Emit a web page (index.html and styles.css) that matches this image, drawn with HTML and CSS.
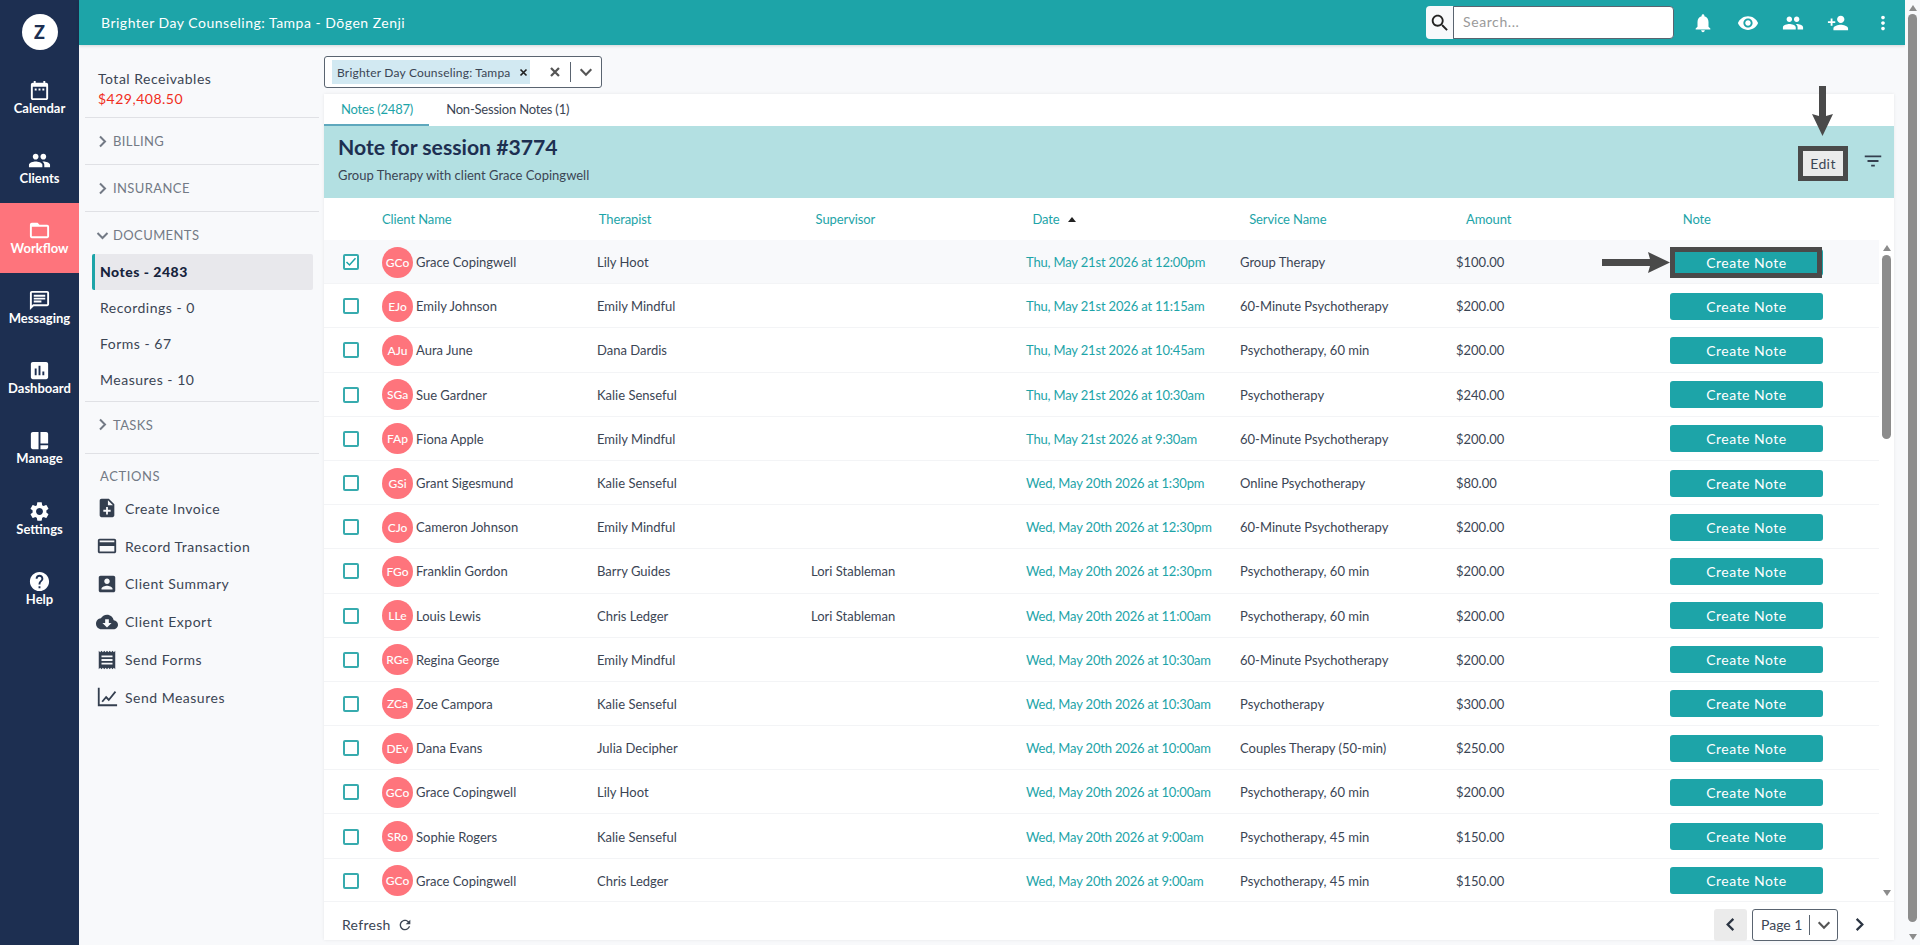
FILE: index.html
```html
<!DOCTYPE html>
<html lang="en">
<head>
    <meta charset="UTF-8">
    <meta name="viewport" content="width=device-width, initial-scale=1.0">
    <title>Notes - Brighter Day Counseling</title>
    <link rel="stylesheet" href="styles.css">
</head>
<body>
    <!-- Icon set -->
    <svg class="icon-defs" xmlns="http://www.w3.org/2000/svg">
        <symbol id="i-calendar" viewBox="0 0 24 24"><path d="M19 4h-1V2h-2v2H8V2H6v2H5C3.9 4 3 4.9 3 6v14c0 1.1.9 2 2 2h14c1.100 0 2-.9 2-2V6c0-1.1-.9-2-2-2zm0 16H5V8h14v12zM7 10h2v2H7zm4 0h2v2h-2zm4 0h2v2h-2z"/></symbol>
        <symbol id="i-people" viewBox="0 0 24 24"><path d="M16 11c1.66 0 2.99-1.34 2.99-3S17.66 5 16 5c-1.66 0-3 1.34-3 3s1.34 3 3 3zm-8 0c1.66 0 2.99-1.34 2.99-3S9.66 5 8 5C6.34 5 5 6.34 5 8s1.34 3 3 3zm0 2c-2.33 0-7 1.17-7 3.5V19h14v-2.5c0-2.33-4.67-3.5-7-3.5zm8 0c-.29 0-.62.02-.97.05 1.16.84 1.97 1.97 1.97 3.45V19h6v-2.5c0-2.33-4.67-3.5-7-3.5z"/></symbol>
        <symbol id="i-folder" viewBox="0 0 24 24"><path d="M20 6h-8l-2-2H4c-1.1 0-1.99.9-1.99 2L2 18c0 1.1.9 2 2 2h16c1.1 0 2-.9 2-2V8c0-1.1-.9-2-2-2zm0 12H4V8h16v10z"/></symbol>
        <symbol id="i-message" viewBox="0 0 24 24"><path d="M20 2H4c-1.1 0-1.99.9-1.99 2L2 22l4-4h14c1.1 0 2-.9 2-2V4c0-1.1-.9-2-2-2zm0 14H5.17L4 17.17V4h16v12zM6 12h8v2H6zm0-3h12v2H6zm0-3h12v2H6z"/></symbol>
        <symbol id="i-chart" viewBox="0 0 24 24"><path d="M19 3H5c-1.1 0-2 .9-2 2v14c0 1.1.9 2 2 2h14c1.1 0 2-.9 2-2V5c0-1.1-.9-2-2-2zM9 17H7v-7h2v7zm4 0h-2V7h2v10zm4 0h-2v-4h2v4z"/></symbol>
        <symbol id="i-manage" viewBox="0 0 24 24"><path d="M3 5v14c0 1.1.9 2 2 2h6V3H5c-1.1 0-2 .9-2 2zm10-2v12h8V5c0-1.1-.9-2-2-2zm0 14v4h6c1.1 0 2-.9 2-2v-2z"/></symbol>
        <symbol id="i-settings" viewBox="0 0 24 24"><path d="M19.14 12.94c.04-.3.06-.61.06-.94 0-.32-.02-.64-.07-.94l2.03-1.58c.18-.14.23-.41.12-.61l-1.92-3.32c-.12-.22-.37-.29-.59-.22l-2.39.96c-.5-.38-1.03-.7-1.62-.94l-.36-2.54c-.04-.24-.24-.41-.48-.41h-3.84c-.24 0-.43.17-.47.41l-.36 2.54c-.59.24-1.13.57-1.62.94l-2.39-.96c-.22-.08-.47 0-.59.22L2.74 8.87c-.12.21-.08.47.12.61l2.03 1.58c-.05.3-.09.63-.09.94s.02.64.07.94l-2.03 1.58c-.18.14-.23.41-.12.61l1.92 3.32c.12.22.37.29.59.22l2.39-.96c.5.38 1.03.7 1.62.94l.36 2.54c.05.24.24.41.48.41h3.84c.24 0 .44-.17.47-.41l.36-2.54c.59-.24 1.13-.56 1.62-.94l2.39.96c.22.08.47 0 .59-.22l1.92-3.32c.12-.22.07-.47-.12-.61l-2.01-1.58zM12 15.6c-1.98 0-3.6-1.62-3.6-3.6s1.62-3.6 3.6-3.6 3.6 1.62 3.6 3.6-1.62 3.6-3.6 3.6z"/></symbol>
        <symbol id="i-help" viewBox="0 0 24 24"><path d="M12 2C6.48 2 2 6.48 2 12s4.48 10 10 10 10-4.48 10-10S17.52 2 12 2zm1 17h-2v-2h2v2zm2.07-7.75l-.9.92C13.45 12.9 13 13.5 13 15h-2v-.5c0-1.1.45-2.1 1.17-2.83l1.24-1.26c.37-.36.59-.86.59-1.41 0-1.1-.9-2-2-2s-2 .9-2 2H8c0-2.21 1.79-4 4-4s4 1.79 4 4c0 .88-.36 1.68-.93 2.25z"/></symbol>
        <symbol id="i-note-add" viewBox="0 0 24 24"><path d="M14 2H6c-1.1 0-1.99.9-1.99 2L4 20c0 1.1.89 2 1.99 2H18c1.1 0 2-.9 2-2V8l-6-6zm2 14h-3v3h-2v-3H8v-2h3v-3h2v3h3v2zm-3-7V3.5L18.5 9H13z"/></symbol>
        <symbol id="i-card" viewBox="0 0 24 24"><path d="M20 4H4c-1.11 0-1.99.89-1.99 2L2 18c0 1.11.89 2 2 2h16c1.11 0 2-.89 2-2V6c0-1.11-.89-2-2-2zm0 14H4v-6h16v6zm0-10H4V6h16v2z"/></symbol>
        <symbol id="i-account" viewBox="0 0 24 24"><path d="M3 5v14c0 1.1.89 2 2 2h14c1.1 0 2-.9 2-2V5c0-1.1-.9-2-2-2H5c-1.11 0-2 .9-2 2zm12 4c0 1.66-1.34 3-3 3s-3-1.34-3-3 1.34-3 3-3 3 1.34 3 3zm-9 8c0-2 4-3.1 6-3.1s6 1.1 6 3.1v1H6v-1z"/></symbol>
        <symbol id="i-cloud" viewBox="0 0 24 24"><path d="M19.35 10.04C18.67 6.59 15.64 4 12 4 9.11 4 6.6 5.64 5.35 8.04 2.34 8.36 0 10.91 0 14c0 3.31 2.69 6 6 6h13c2.76 0 5-2.24 5-5 0-2.64-2.05-4.78-4.65-4.96zM17 13l-5 5-5-5h3V9h4v4h3z"/></symbol>
        <symbol id="i-receipt" viewBox="0 0 24 24"><path d="M18 17H6v-2h12v2zm0-4H6v-2h12v2zm0-4H6V7h12v2zM3 22l1.5-1.5L6 22l1.5-1.5L9 22l1.5-1.5L12 22l1.5-1.5L15 22l1.5-1.5L18 22l1.5-1.5L21 22V2l-1.5 1.5L18 2l-1.5 1.5L15 2l-1.5 1.5L12 2l-1.5 1.5L9 2 7.5 3.5 6 2 4.5 3.5 3 2v20z"/></symbol>
        <symbol id="i-measure" viewBox="0 0 24 24"><path d="M2 2h2v18h19v2H2zM6 16.5l5-6 3 3 6.5-8 1.5 1.2-8 9.8-3-3-3.5 4.2z"/></symbol>
        <symbol id="i-bell" viewBox="0 0 24 24"><path d="M12 22c1.1 0 2-.9 2-2h-4c0 1.1.89 2 2 2zm6-6v-5c0-3.07-1.64-5.64-4.5-6.32V4c0-.83-.67-1.5-1.5-1.5s-1.5.67-1.5 1.5v.68C7.63 5.36 6 7.92 6 11v5l-2 2v1h16v-1l-2-2z"/></symbol>
        <symbol id="i-eye" viewBox="0 0 24 24"><path d="M12 4.5C7 4.5 2.73 7.61 1 12c1.73 4.39 6 7.5 11 7.5s9.27-3.11 11-7.5c-1.73-4.39-6-7.5-11-7.5zM12 17c-2.76 0-5-2.24-5-5s2.24-5 5-5 5 2.24 5 5-2.24 5-5 5zm0-8c-1.66 0-3 1.34-3 3s1.34 3 3 3 3-1.34 3-3-1.34-3-3-3z"/></symbol>
        <symbol id="i-person-add" viewBox="0 0 24 24"><path d="M15 12c2.21 0 4-1.79 4-4s-1.79-4-4-4-4 1.79-4 4 1.79 4 4 4zm-9-2V7H4v3H1v2h3v3h2v-3h3v-2H6zm9 4c-2.67 0-8 1.34-8 4v2h16v-2c0-2.66-5.33-4-8-4z"/></symbol>
        <symbol id="i-more" viewBox="0 0 24 24"><path d="M12 8c1.1 0 2-.9 2-2s-.9-2-2-2-2 .9-2 2 .9 2 2 2zm0 2c-1.1 0-2 .9-2 2s.9 2 2 2 2-.9 2-2-.9-2-2-2zm0 6c-1.1 0-2 .9-2 2s.9 2 2 2 2-.9 2-2-.9-2-2-2z"/></symbol>
        <symbol id="i-search" viewBox="0 0 24 24"><path d="M15.5 14h-.79l-.28-.27C15.41 12.59 16 11.11 16 9.5 16 5.91 13.09 3 9.5 3S3 5.91 3 9.5 5.91 16 9.5 16c1.61 0 3.09-.59 4.23-1.57l.27.28v.79l5 4.99L20.49 19l-4.99-5zm-6 0C7.01 14 5 11.99 5 9.5S7.01 5 9.5 5 14 7.01 14 9.5 11.99 14 9.5 14z"/></symbol>
        <symbol id="i-filter" viewBox="0 0 24 24"><path d="M10 18h4v-2h-4v2zM3 6v2h18V6H3zm3 7h12v-2H6v2z"/></symbol>
        <symbol id="i-refresh" viewBox="0 0 24 24"><path d="M17.65 6.35C16.2 4.9 14.21 4 12 4c-4.42 0-7.99 3.58-7.99 8s3.57 8 7.99 8c3.73 0 6.84-2.55 7.73-6h-2.08c-.82 2.33-3.04 4-5.65 4-3.31 0-6-2.69-6-6s2.69-6 6-6c1.66 0 3.14.69 4.22 1.78L13 11h7V4l-2.35 2.35z"/></symbol>
        <symbol id="i-right" viewBox="0 0 24 24"><path d="M8 4l8 8-8 8" fill="none" stroke="currentColor" stroke-width="3.2"/></symbol>
        <symbol id="i-left" viewBox="0 0 24 24"><path d="M16 4l-8 8 8 8" fill="none" stroke="currentColor" stroke-width="3.2"/></symbol>
        <symbol id="i-down" viewBox="0 0 24 24"><path d="M4 8l8 8 8-8" fill="none" stroke="currentColor" stroke-width="3.2"/></symbol>
        <symbol id="i-close" viewBox="0 0 24 24"><path d="M4 4l16 16M20 4L4 20" fill="none" stroke="currentColor" stroke-width="4.5"/></symbol>
    </svg>

    <div class="app">
        <!-- Main navigation -->
        <nav class="nav">
            <div class="nav-logo"><span>Z</span></div>
            <a class="nav-item"><svg><use href="#i-calendar"/></svg>Calendar</a>
            <a class="nav-item"><svg><use href="#i-people"/></svg>Clients</a>
            <a class="nav-item active"><svg><use href="#i-folder"/></svg>Workflow</a>
            <a class="nav-item"><svg><use href="#i-message"/></svg>Messaging</a>
            <a class="nav-item"><svg><use href="#i-chart"/></svg>Dashboard</a>
            <a class="nav-item"><svg><use href="#i-manage"/></svg>Manage</a>
            <a class="nav-item"><svg><use href="#i-settings"/></svg>Settings</a>
            <a class="nav-item"><svg><use href="#i-help"/></svg>Help</a>
        </nav>

        <div class="page">
            <!-- Top bar -->
            <header class="topbar">
                <div class="topbar-title">Brighter Day Counseling: Tampa - Dōgen Zenji</div>
                <div class="search">
                    <span class="search-btn"><svg><use href="#i-search"/></svg></span>
                    <span class="search-input">Search...</span>
                </div>
                <div class="topbar-icons">
                    <svg><use href="#i-bell"/></svg>
                    <svg><use href="#i-eye"/></svg>
                    <svg><use href="#i-people"/></svg>
                    <svg><use href="#i-person-add"/></svg>
                    <svg><use href="#i-more"/></svg>
                </div>
            </header>

            <div class="content">
                <!-- Secondary sidebar -->
                <aside class="side">
                    <div class="receivables">
                        <div>Total Receivables</div>
                        <div class="red">$429,408.50</div>
                    </div>
                    <div class="side-section"><svg><use href="#i-right"/></svg>BILLING</div>
                    <div class="side-section"><svg><use href="#i-right"/></svg>INSURANCE</div>
                    <div class="side-group">
                        <div class="side-section plain"><svg><use href="#i-down"/></svg>DOCUMENTS</div>
                        <a class="side-link current">Notes - 2483</a>
                        <a class="side-link">Recordings - 0</a>
                        <a class="side-link">Forms - 67</a>
                        <a class="side-link">Measures - 10</a>
                    </div>
                    <div class="side-section tall"><svg><use href="#i-right"/></svg>TASKS</div>
                    <div class="actions-title">ACTIONS</div>
                    <a class="action"><svg><use href="#i-note-add"/></svg>Create Invoice</a>
                    <a class="action"><svg><use href="#i-card"/></svg>Record Transaction</a>
                    <a class="action"><svg><use href="#i-account"/></svg>Client Summary</a>
                    <a class="action"><svg><use href="#i-cloud"/></svg>Client Export</a>
                    <a class="action"><svg><use href="#i-receipt"/></svg>Send Forms</a>
                    <a class="action"><svg><use href="#i-measure"/></svg>Send Measures</a>
                </aside>

                <main class="main">
                    <div class="select">
                        <span class="chip">Brighter Day Counseling: Tampa<svg><use href="#i-close"/></svg></span>
                        <svg class="select-clear"><use href="#i-close"/></svg>
                        <span class="select-sep"></span>
                        <svg class="select-arrow"><use href="#i-down"/></svg>
                    </div>

                    <section class="card">
                        <div class="tabs">
                            <a class="tab active">Notes (2487)</a>
                            <a class="tab">Non-Session Notes (1)</a>
                        </div>

                        <div class="banner">
                            <div class="banner-text">
                                <h1>Note for session #3774</h1>
                                <p>Group Therapy with client Grace Copingwell</p>
                            </div>
                            <button class="edit-btn">Edit</button>
                            <svg class="filter-icon"><use href="#i-filter"/></svg>
                        </div>

                        <div class="thead">
                            <span>Client Name</span>
                            <span>Therapist</span>
                            <span>Supervisor</span>
                            <span>Date <i class="sort"></i></span>
                            <span>Service Name</span>
                            <span>Amount</span>
                            <span>Note</span>
                        </div>

                        <div class="tbody">
                            <div class="rows">
                                <div class="row selected">
                                    <span class="check on"><svg viewBox="0 0 16 16"><path d="M2 8l4 4 8-9" fill="none" stroke="#1da4a8" stroke-width="2"/></svg></span>
                                    <span class="client"><b class="avatar">GCo</b>Grace Copingwell</span>
                                    <span>Lily Hoot</span><span></span>
                                    <span class="date">Thu, May 21st 2026 at 12:00pm</span>
                                    <span>Group Therapy</span><span>$100.00</span>
                                    <button class="note-btn">Create Note</button>
                                </div>
                                <div class="row">
                                    <span class="check"></span>
                                    <span class="client"><b class="avatar">EJo</b>Emily Johnson</span>
                                    <span>Emily Mindful</span><span></span>
                                    <span class="date">Thu, May 21st 2026 at 11:15am</span>
                                    <span>60-Minute Psychotherapy</span><span>$200.00</span>
                                    <button class="note-btn">Create Note</button>
                                </div>
                                <div class="row">
                                    <span class="check"></span>
                                    <span class="client"><b class="avatar">AJu</b>Aura June</span>
                                    <span>Dana Dardis</span><span></span>
                                    <span class="date">Thu, May 21st 2026 at 10:45am</span>
                                    <span>Psychotherapy, 60 min</span><span>$200.00</span>
                                    <button class="note-btn">Create Note</button>
                                </div>
                                <div class="row">
                                    <span class="check"></span>
                                    <span class="client"><b class="avatar">SGa</b>Sue Gardner</span>
                                    <span>Kalie Senseful</span><span></span>
                                    <span class="date">Thu, May 21st 2026 at 10:30am</span>
                                    <span>Psychotherapy</span><span>$240.00</span>
                                    <button class="note-btn">Create Note</button>
                                </div>
                                <div class="row">
                                    <span class="check"></span>
                                    <span class="client"><b class="avatar">FAp</b>Fiona Apple</span>
                                    <span>Emily Mindful</span><span></span>
                                    <span class="date">Thu, May 21st 2026 at 9:30am</span>
                                    <span>60-Minute Psychotherapy</span><span>$200.00</span>
                                    <button class="note-btn">Create Note</button>
                                </div>
                                <div class="row">
                                    <span class="check"></span>
                                    <span class="client"><b class="avatar">GSi</b>Grant Sigesmund</span>
                                    <span>Kalie Senseful</span><span></span>
                                    <span class="date">Wed, May 20th 2026 at 1:30pm</span>
                                    <span>Online Psychotherapy</span><span>$80.00</span>
                                    <button class="note-btn">Create Note</button>
                                </div>
                                <div class="row">
                                    <span class="check"></span>
                                    <span class="client"><b class="avatar">CJo</b>Cameron Johnson</span>
                                    <span>Emily Mindful</span><span></span>
                                    <span class="date">Wed, May 20th 2026 at 12:30pm</span>
                                    <span>60-Minute Psychotherapy</span><span>$200.00</span>
                                    <button class="note-btn">Create Note</button>
                                </div>
                                <div class="row">
                                    <span class="check"></span>
                                    <span class="client"><b class="avatar">FGo</b>Franklin Gordon</span>
                                    <span>Barry Guides</span><span>Lori Stableman</span>
                                    <span class="date">Wed, May 20th 2026 at 12:30pm</span>
                                    <span>Psychotherapy, 60 min</span><span>$200.00</span>
                                    <button class="note-btn">Create Note</button>
                                </div>
                                <div class="row">
                                    <span class="check"></span>
                                    <span class="client"><b class="avatar">LLe</b>Louis Lewis</span>
                                    <span>Chris Ledger</span><span>Lori Stableman</span>
                                    <span class="date">Wed, May 20th 2026 at 11:00am</span>
                                    <span>Psychotherapy, 60 min</span><span>$200.00</span>
                                    <button class="note-btn">Create Note</button>
                                </div>
                                <div class="row">
                                    <span class="check"></span>
                                    <span class="client"><b class="avatar">RGe</b>Regina George</span>
                                    <span>Emily Mindful</span><span></span>
                                    <span class="date">Wed, May 20th 2026 at 10:30am</span>
                                    <span>60-Minute Psychotherapy</span><span>$200.00</span>
                                    <button class="note-btn">Create Note</button>
                                </div>
                                <div class="row">
                                    <span class="check"></span>
                                    <span class="client"><b class="avatar">ZCa</b>Zoe Campora</span>
                                    <span>Kalie Senseful</span><span></span>
                                    <span class="date">Wed, May 20th 2026 at 10:30am</span>
                                    <span>Psychotherapy</span><span>$300.00</span>
                                    <button class="note-btn">Create Note</button>
                                </div>
                                <div class="row">
                                    <span class="check"></span>
                                    <span class="client"><b class="avatar">DEv</b>Dana Evans</span>
                                    <span>Julia Decipher</span><span></span>
                                    <span class="date">Wed, May 20th 2026 at 10:00am</span>
                                    <span>Couples Therapy (50-min)</span><span>$250.00</span>
                                    <button class="note-btn">Create Note</button>
                                </div>
                                <div class="row">
                                    <span class="check"></span>
                                    <span class="client"><b class="avatar">GCo</b>Grace Copingwell</span>
                                    <span>Lily Hoot</span><span></span>
                                    <span class="date">Wed, May 20th 2026 at 10:00am</span>
                                    <span>Psychotherapy, 60 min</span><span>$200.00</span>
                                    <button class="note-btn">Create Note</button>
                                </div>
                                <div class="row">
                                    <span class="check"></span>
                                    <span class="client"><b class="avatar">SRo</b>Sophie Rogers</span>
                                    <span>Kalie Senseful</span><span></span>
                                    <span class="date">Wed, May 20th 2026 at 9:00am</span>
                                    <span>Psychotherapy, 45 min</span><span>$150.00</span>
                                    <button class="note-btn">Create Note</button>
                                </div>
                                <div class="row">
                                    <span class="check"></span>
                                    <span class="client"><b class="avatar">GCo</b>Grace Copingwell</span>
                                    <span>Chris Ledger</span><span></span>
                                    <span class="date">Wed, May 20th 2026 at 9:00am</span>
                                    <span>Psychotherapy, 45 min</span><span>$150.00</span>
                                    <button class="note-btn">Create Note</button>
                                </div>
                            </div>
                            <div class="scrollbar inner">
                                <i class="arrow-up"></i>
                                <i class="thumb"></i>
                                <i class="arrow-down"></i>
                            </div>
                        </div>

                        <div class="tfoot">
                            <span class="refresh">Refresh<svg><use href="#i-refresh"/></svg></span>
                            <div class="pager">
                                <span class="pager-prev"><svg><use href="#i-left"/></svg></span>
                                <span class="pager-select">Page 1<i class="select-sep"></i><svg><use href="#i-down"/></svg></span>
                                <span class="pager-next"><svg><use href="#i-right"/></svg></span>
                            </div>
                        </div>

                        <!-- Tutorial annotations -->
                        <svg class="annot annot-edit" viewBox="0 0 21 50"><path d="M7 0h7v30l7-2-10.500 22L0 28l7 2z"/></svg>
                        <svg class="annot annot-note" viewBox="0 0 68 21"><path d="M0 7h48l-2-7 22 10.500L46 21l2-7H0z"/></svg>
                        <span class="annot-box annot-box-edit"></span>
                        <span class="annot-box annot-box-note"></span>
                    </section>
                </main>
            </div>
        </div>

        <!-- Page scrollbar -->
        <div class="scrollbar outer">
            <i class="arrow-up"></i>
            <i class="thumb"></i>
            <i class="arrow-down"></i>
        </div>
    </div>
</body>
</html>
```

FILE: styles.css
```css
* {
    margin: 0;
    padding: 0;
    box-sizing: border-box;
}

body {
    height: 945px;
    background: #f8f9fb;
    font-family: 'Lato', 'Open Sans', sans-serif;
    font-size: 13px;
    color: #3b4554;
    overflow: hidden;
}

svg {
    fill: currentColor;
}

.icon-defs {
    display: none;
}

.app {
    display: flex;
    height: 945px;
}

/* Main navigation */
.nav {
    width: 79px;
    flex-shrink: 0;
    background: #1d2f51;
    color: #fff;
}

.nav-logo {
    height: 62.5px;
    padding-top: 14px;
}

.nav-logo span {
    display: block;
    width: 36px;
    height: 36px;
    margin: 0 auto;
    border-radius: 50%;
    background: #fff;
    color: #1d2f51;
    font-size: 18px;
    font-weight: 900;
    line-height: 36px;
    text-align: center;
}

.nav-item {
    display: flex;
    flex-direction: column;
    align-items: center;
    height: 70.2px;
    padding-top: 16px;
    font-size: 13px;
    font-weight: 700;
    line-height: 16px;
}

.nav-item svg {
    width: 23px;
    height: 23px;
    margin-bottom: -2px;
}

.nav-item.active {
    background: #fe747c;
}

.page {
    flex: 1;
    display: flex;
    flex-direction: column;
    min-width: 0;
}

/* Top bar */
.topbar {
    height: 45px;
    flex-shrink: 0;
    display: flex;
    align-items: center;
    padding-left: 22px;
    background: #1da4a8;
    color: #fff;
    box-shadow: 0 1px 3px rgba(0, 0, 0, 0.15);
}

.topbar-title {
    flex: 1;
    font-size: 14px;
    letter-spacing: 0.5px;
}

.search {
    display: flex;
    width: 248px;
    height: 33px;
}

.search-btn {
    width: 27px;
    display: flex;
    align-items: center;
    justify-content: center;
    background: #f8f9fb;
    border-radius: 4px 0 0 4px;
    color: #222;
}

.search-btn svg {
    width: 22px;
    height: 22px;
}

.search-input {
    flex: 1;
    padding: 0 9px;
    background: #fff;
    border: 1px solid #5a6470;
    border-radius: 0 4px 4px 0;
    color: #9a9a9a;
    font-size: 14px;
    line-height: 30px;
    letter-spacing: 0.6px;
}

.topbar-icons {
    display: flex;
    gap: 23px;
    padding: 0 11px 0 18px;
}

.topbar-icons svg {
    width: 22px;
    height: 22px;
}

.content {
    flex: 1;
    display: flex;
    min-height: 0;
}

/* Secondary sidebar */
.side {
    width: 245px;
    flex-shrink: 0;
    padding: 24px 5px 0 6px;
    font-size: 14px;
    letter-spacing: 0.5px;
}

.receivables {
    height: 49px;
    padding-left: 13px;
    border-bottom: 1px solid #e0e1e5;
    line-height: 20px;
}

.red {
    color: #f02d21;
}

.side-section {
    display: flex;
    align-items: center;
    height: 47px;
    padding-left: 10px;
    border-bottom: 1px solid #e0e1e5;
    color: #737a85;
    font-size: 13px;
    letter-spacing: 0.4px;
}

.side-section svg {
    width: 15px;
    height: 15px;
    margin-right: 3px;
}

.side-section.plain {
    border-bottom: none;
    height: 42px;
    padding-top: 4px;
}

.side-section.tall {
    height: 52px;
    padding-bottom: 6px;
}

.side-group {
    border-bottom: 1px solid #e0e1e5;
    padding-bottom: 3px;
}

.side-link {
    display: block;
    height: 36px;
    margin: 0 6px 0 7px;
    padding-left: 5px;
    border-left: 3px solid transparent;
    line-height: 36px;
}

.side-link.current {
    background: #e8e8ec;
    border-left-color: #1da4a8;
    border-radius: 2px;
    color: #16233c;
    font-weight: 900;
}

.actions-title {
    height: 35.5px;
    padding: 14px 0 0 15px;
    color: #737a85;
    font-size: 13px;
    letter-spacing: 0.6px;
}

.action {
    display: flex;
    align-items: center;
    height: 37.8px;
    padding-left: 11px;
}

.action svg {
    width: 22px;
    height: 22px;
    margin-right: 7px;
    color: #343f4f;
}

/* Main column */
.main {
    flex: 1;
    min-width: 0;
    padding: 11px 11px 0 0;
}

.select {
    display: flex;
    align-items: center;
    width: 278px;
    height: 32px;
    padding: 0 7px;
    background: #fff;
    border: 1px solid #5a6470;
    border-radius: 3px;
}

.chip {
    display: flex;
    align-items: center;
    width: 199px;
    height: 24px;
    padding-left: 5px;
    background: #d2e9f2;
    font-size: 12px;
    letter-spacing: 0.2px;
}

.chip svg {
    width: 9px;
    height: 9px;
    margin-left: 8px;
    color: #222;
}

.select-clear {
    width: 12px;
    height: 12px;
    margin-left: 19px;
    color: #555;
}

.select-sep {
    display: inline-block;
    width: 1px;
    height: 20px;
    margin: 0 7px 0 9px;
    background: #5a6470;
}

.select-arrow {
    width: 16px;
    height: 16px;
    color: #555;
}

.card {
    position: relative;
    height: 846px;
    margin-top: 6px;
    background: #fff;
    box-shadow: 0 0 3px rgba(0, 0, 0, 0.08);
}

.tabs {
    display: flex;
    height: 32px;
    letter-spacing: -0.2px;
}

.tab {
    padding: 0 16px 0 17px;
    font-size: 13px;
    line-height: 31px;
}

.tab.active {
    color: #1da4a8;
    border-bottom: 2px solid #5fa8bd;
}

.banner {
    display: flex;
    align-items: flex-start;
    height: 72px;
    padding: 8px 8px 8px 14px;
    background: #b3e0e2;
}

.banner-text {
    flex: 1;
}

.banner h1 {
    color: #1d2f51;
    font-size: 21.2px;
    font-weight: 700;
    line-height: 26px;
}

.banner p {
    margin-top: 7px;
    font-size: 13px;
}

.edit-btn {
    width: 40px;
    height: 25px;
    margin-top: 17px;
    border: none;
    background: #ebebeb;
    color: #3b4554;
    font: 14px 'Lato', sans-serif;
    letter-spacing: 0.4px;
}

.filter-icon {
    width: 22px;
    height: 22px;
    margin: 16px 2px 0 19px;
    color: #343f4f;
}

.thead {
    display: grid;
    grid-template-columns: repeat(7, 216.8px);
    align-items: center;
    height: 42px;
    padding-left: 58px;
    color: #1da4a8;
    font-size: 13px;
    letter-spacing: -0.1px;
}

.sort {
    display: inline-block;
    margin: 0 0 2px 5px;
    border: 4px solid transparent;
    border-top: none;
    border-bottom: 5px solid #222;
}

.tbody {
    display: flex;
    height: 661px;
}

.rows {
    flex: 1;
    overflow: hidden;
}

.row {
    display: grid;
    grid-template-columns: 58px 215px 214px 215px 214px 216px 214px 153px;
    align-items: center;
    height: 44.2px;
    padding-top: 1px;
    border-bottom: 1px solid #f3f4f6;
    font-size: 13px;
}

.row.selected {
    background: #f8f9fb;
}

.check {
    display: block;
    width: 16px;
    height: 16px;
    margin-left: 19px;
    background: #fff;
    border: 2px solid #37abae;
    border-radius: 2px;
}

.check svg {
    display: block;
    width: 12px;
    height: 12px;
}

.client {
    display: flex;
    align-items: center;
}

.avatar {
    width: 31px;
    height: 31px;
    margin-right: 3px;
    border-radius: 50%;
    background: #fe747c;
    color: #fff;
    font-size: 12px;
    font-weight: 500;
    line-height: 31px;
    text-align: center;
}

.date {
    color: #1da4a8;
    letter-spacing: -0.17px;
}

.note-btn {
    width: 153px;
    height: 27px;
    border: none;
    border-radius: 3px;
    background: #1da4a8;
    color: #fff;
    font: 14px 'Lato', sans-serif;
    letter-spacing: 0.5px;
}

/* Scrollbars */
.scrollbar {
    display: flex;
    flex-direction: column;
    align-items: center;
    flex-shrink: 0;
}

.scrollbar.inner {
    width: 15px;
    padding-top: 5px;
}

.scrollbar.outer {
    width: 15px;
    height: 945px;
    padding-top: 5px;
    background: #f8f9fb;
}

.arrow-up,
.arrow-down {
    display: block;
    flex-shrink: 0;
    border: 4.5px solid transparent;
}

.arrow-up {
    border-top: none;
    border-bottom: 6px solid #8c8c8c;
}

.arrow-down {
    margin-top: auto;
    margin-bottom: 5px;
    border-bottom: none;
    border-top: 6px solid #8c8c8c;
}

.thumb {
    display: block;
    width: 9px;
    border-radius: 5px;
    background: #8c8c8c;
}

.inner .thumb {
    height: 184px;
    margin-top: 4px;
}

.outer .thumb {
    height: 908px;
    margin-top: 3px;
}

/* Table footer */
.tfoot {
    display: flex;
    align-items: center;
    justify-content: space-between;
    height: 39px;
    padding: 7px 18px 0 18px;
    border-top: 1px solid #f3f4f6;
}

.refresh {
    display: flex;
    align-items: center;
    font-size: 14px;
    letter-spacing: 0.3px;
}

.refresh svg {
    width: 16px;
    height: 16px;
    margin-left: 6px;
}

.pager {
    display: flex;
    align-items: center;
    gap: 5px;
}

.pager-prev,
.pager-next {
    display: flex;
    align-items: center;
    justify-content: center;
    width: 33px;
    height: 32px;
    border-radius: 3px;
    color: #2b3442;
}

.pager-prev {
    background: #ebebeb;
}

.pager-prev svg,
.pager-next svg {
    width: 17px;
    height: 17px;
}

.pager-select {
    display: flex;
    align-items: center;
    width: 86px;
    height: 32px;
    padding-left: 8px;
    border: 1px solid #5a6470;
    border-radius: 3px;
    font-size: 14px;
}

.pager-select .select-sep {
    margin: 0 6px 0 7px;
}

.pager-select svg {
    width: 16px;
    height: 16px;
    color: #555;
}

/* Tutorial annotations */
.annot {
    position: absolute;
    fill: #4a4a4a;
}

.annot-edit {
    top: -8px;
    right: 61px;
    width: 21px;
    height: 50px;
}

.annot-note {
    top: 158px;
    right: 224px;
    width: 68px;
    height: 21px;
}

.annot-box {
    position: absolute;
    border: 5px solid #4a4a4a;
}

.annot-box-edit {
    top: 52px;
    right: 46px;
    width: 50px;
    height: 35px;
}

.annot-box-note {
    top: 153px;
    right: 72px;
    width: 152px;
    height: 31px;
}
```
